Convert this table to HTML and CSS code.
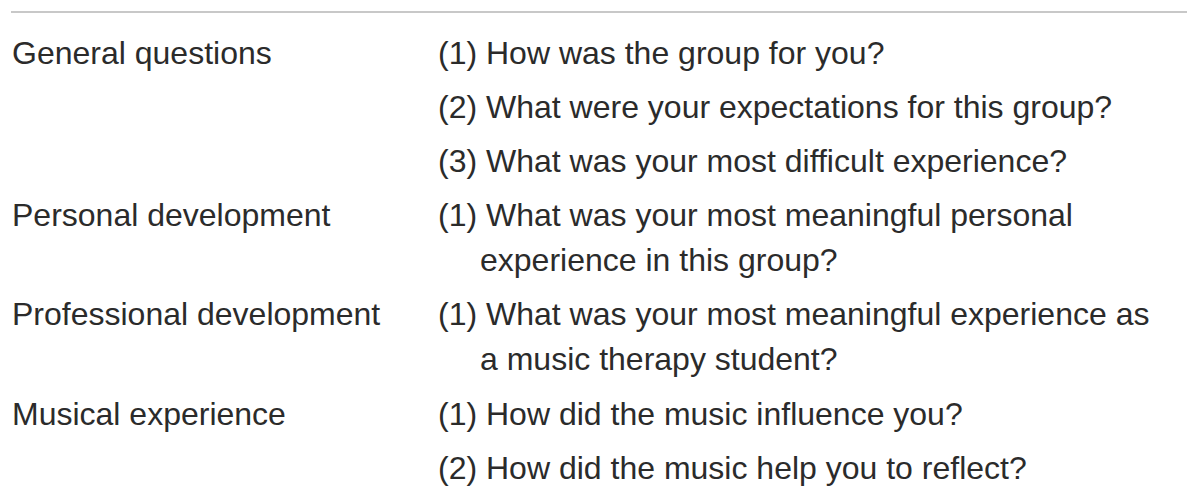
FILE: index.html
```html
<!DOCTYPE html>
<html>
<head>
<meta charset="utf-8">
<link rel="stylesheet" href="styles.css">
</head>
<body>
<table class="qtable">
  <tbody>
    <tr>
      <td class="cat">General questions</td>
      <td class="qs">
        <div class="q">(1) How was the group for you?</div>
        <div class="q">(2) What were your expectations for this group?</div>
        <div class="q">(3) What was your most difficult experience?</div>
      </td>
    </tr>
    <tr>
      <td class="cat">Personal development</td>
      <td class="qs">
        <div class="q">(1) What was your most meaningful personal experience in this group?</div>
      </td>
    </tr>
    <tr>
      <td class="cat">Professional development</td>
      <td class="qs">
        <div class="q">(1) What was your most meaningful experience as a music therapy student?</div>
      </td>
    </tr>
    <tr>
      <td class="cat">Musical experience</td>
      <td class="qs">
        <div class="q">(1) How did the music influence you?</div>
        <div class="q">(2) How did the music help you to reflect?</div>
      </td>
    </tr>
  </tbody>
</table>
</body>
</html>
```

FILE: styles.css
```css
html, body {
  margin: 0;
  padding: 0;
  background: #ffffff;
}
body {
  font-family: "Liberation Sans", Arial, sans-serif;
  font-size: 32px;
  color: #2b2b2b;
}
.qtable {
  margin: 11px 0 0 11px;
  width: 1176px;
  border-collapse: collapse;
  border-top: 2px solid #c8c8c8;
}
.qtable td {
  vertical-align: top;
  padding: 0;
  line-height: 45px;
}
.cat {
  width: 426px;
}
.qtable td.cat {
  padding: 4.6px 0 4.6px 1px;
}
.qtable tr:first-child td.cat {
  padding-top: 17.6px;
}
.qtable td.qs {
  padding: 0 24px 0 0;
}
.qtable tr:first-child td.qs {
  padding-top: 13px;
}
.q {
  padding: 4.6px 0 4.6px 42px;
  text-indent: -42px;
}
```
